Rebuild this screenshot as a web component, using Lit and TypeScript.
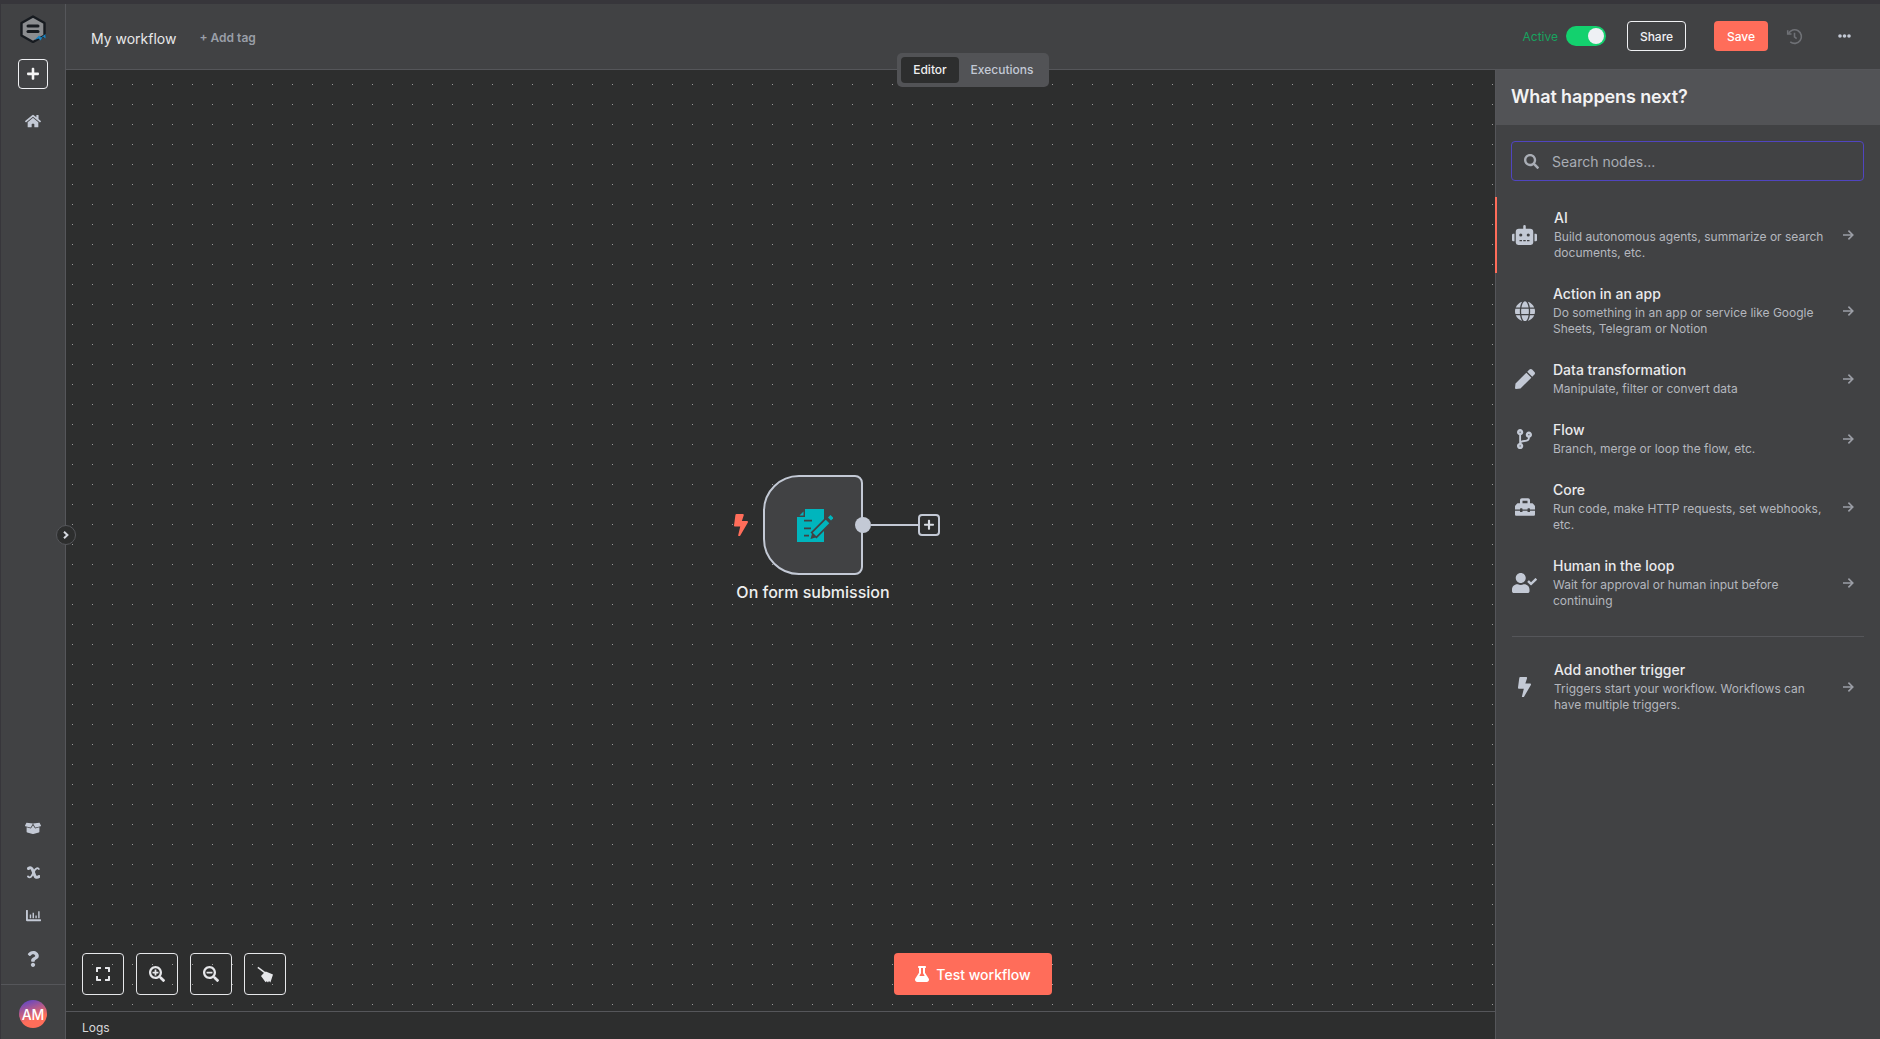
import { LitElement, html, css } from "lit";
import { customElement } from "lit/decorators.js";

const P: Record<string, [string, string]> = {
  home: ["0 0 576 512", "M280.37 148.26L96 300.11V464a16 16 0 0 0 16 16l112.06-.29a16 16 0 0 0 15.92-16V368a16 16 0 0 1 16-16h64a16 16 0 0 1 16 16v95.64a16 16 0 0 0 16 16.05L464 480a16 16 0 0 0 16-16V300L295.67 148.26a12.19 12.19 0 0 0-15.3 0zM571.6 251.47L488 182.56V44.05a12 12 0 0 0-12-12h-56a12 12 0 0 0-12 12v72.61L318.47 43a48 48 0 0 0-61 0L4.34 251.47a12 12 0 0 0-1.6 16.9l25.5 31A12 12 0 0 0 45.15 301l235.22-193.74a12.19 12.19 0 0 1 15.3 0L530.9 301a12 12 0 0 0 16.9-1.6l25.5-31a12 12 0 0 0-1.7-16.93z"],
  bolt: ["0 0 320 512", "M296 160H180.6l42.6-129.8C227.2 15 215.7 0 200 0H56C44 0 33.8 8.9 32.2 20.8l-32 240C-1.7 275.2 9.5 288 24 288h118.7L96.6 482.5c-3.6 15.2 8 29.5 23.3 29.5 8.4 0 16.4-4.4 20.8-12l176-304c9.3-15.9-2.2-36-20.7-36z"],
  pen: ["0 0 512 512", "M290.74 93.24l128.02 128.02-277.99 277.99-114.14 12.6C11.35 513.54-1.56 500.62.14 485.34l12.7-114.22 277.9-277.88zm207.2-19.06l-60.11-60.11c-18.75-18.75-49.16-18.75-67.91 0l-56.55 56.55 128.02 128.02 56.55-56.55c18.75-18.76 18.75-49.16 0-67.91z"],
  search: ["0 0 512 512", "M505 442.7L405.3 343c-4.5-4.5-10.6-7-17-7H372c27.6-35.3 44-79.7 44-128C416 93.1 322.9 0 208 0S0 93.1 0 208s93.1 208 208 208c48.3 0 92.7-16.4 128-44v16.3c0 6.4 2.5 12.5 7 17l99.7 99.7c9.4 9.4 24.6 9.4 33.9 0l28.3-28.3c9.4-9.4 9.4-24.6.1-34zM208 336c-70.7 0-128-57.2-128-128 0-70.7 57.2-128 128-128 70.7 0 128 57.2 128 128 0 70.7-57.2 128-128 128z"],
  zoomIn: ["0 0 512 512", "M304 192v32c0 6.6-5.4 12-12 12h-56v56c0 6.6-5.4 12-12 12h-32c-6.6 0-12-5.4-12-12v-56h-56c-6.6 0-12-5.4-12-12v-32c0-6.6 5.4-12 12-12h56v-56c0-6.6 5.4-12 12-12h32c6.6 0 12 5.4 12 12v56h56c6.6 0 12 5.4 12 12zm201 284.7L476.7 505c-9.4 9.4-24.6 9.4-33.9 0L343 405.3c-4.5-4.5-7-10.6-7-17V372c-35.3 27.6-79.7 44-128 44C93.1 416 0 322.9 0 208S93.1 0 208 0s208 93.1 208 208c0 48.3-16.4 92.7-44 128h16.3c6.4 0 12.5 2.5 17 7l99.7 99.7c9.3 9.4 9.3 24.6 0 34zM344 208c0-75.2-60.8-136-136-136S72 132.8 72 208s60.8 136 136 136 136-60.8 136-136z"],
  zoomOut: ["0 0 512 512", "M304 192v32c0 6.6-5.4 12-12 12H124c-6.6 0-12-5.4-12-12v-32c0-6.6 5.4-12 12-12h168c6.6 0 12 5.4 12 12zm201 284.7L476.7 505c-9.4 9.4-24.6 9.4-33.9 0L343 405.3c-4.5-4.5-7-10.6-7-17V372c-35.3 27.6-79.7 44-128 44C93.1 416 0 322.9 0 208S93.1 0 208 0s208 93.1 208 208c0 48.3-16.4 92.7-44 128h16.3c6.4 0 12.5 2.5 17 7l99.7 99.7c9.3 9.4 9.3 24.6 0 34zM344 208c0-75.2-60.8-136-136-136S72 132.8 72 208s60.8 136 136 136 136-60.8 136-136z"],
  expand: ["0 0 448 512", "M0 180V56c0-13.3 10.7-24 24-24h124c6.6 0 12 5.4 12 12v40c0 6.6-5.4 12-12 12H64v84c0 6.6-5.4 12-12 12H12c-6.6 0-12-5.4-12-12zM288 44v40c0 6.6 5.4 12 12 12h84v84c0 6.6 5.4 12 12 12h40c6.6 0 12-5.4 12-12V56c0-13.3-10.7-24-24-24H300c-6.6 0-12 5.4-12 12zm148 276h-40c-6.6 0-12 5.4-12 12v84h-84c-6.6 0-12 5.4-12 12v40c0 6.6 5.4 12 12 12h124c13.3 0 24-10.7 24-24V332c0-6.6-5.4-12-12-12zM160 468v-40c0-6.6-5.4-12-12-12H64v-84c0-6.6-5.4-12-12-12H12c-6.6 0-12 5.4-12 12v124c0 13.3 10.7 24 24 24h124c6.6 0 12-5.4 12-12z"],
  flask: ["0 0 448 512", "M437.2 403.5L320 215V64h8c13.3 0 24-10.7 24-24V24c0-13.3-10.7-24-24-24H120c-13.3 0-24 10.7-24 24v16c0 13.3 10.7 24 24 24h8v151L10.8 403.5C-18.5 450.6 15.3 512 70.9 512h306.2c55.7 0 89.4-61.5 60.1-108.5zM137.9 320l48.2-77.6c3.7-5.2 5.8-11.6 5.8-18.4V64h64v160c0 6.9 2.2 13.2 5.8 18.4l48.2 77.6h-172z"],
  question: ["0 0 384 512", "M202.021 0C122.202 0 70.503 32.703 29.914 91.026c-7.363 10.58-5.093 25.086 5.178 32.874l43.138 32.709c10.373 7.865 25.132 6.026 33.253-4.148 25.049-31.381 43.63-49.449 82.757-49.449 30.764 0 68.816 19.799 68.816 49.631 0 22.552-18.617 34.134-48.993 51.164-35.423 19.86-82.299 44.576-82.299 106.405V320c0 13.255 10.745 24 24 24h72.471c13.255 0 24-10.745 24-24v-5.773c0-42.86 125.268-44.645 125.268-160.627C377.504 66.256 286.902 0 202.021 0zM192 373.459c-38.196 0-69.271 31.075-69.271 69.271 0 38.195 31.075 69.27 69.271 69.27s69.271-31.075 69.271-69.271-31.075-69.27-69.271-69.27z"],
  plus: ["0 0 448 512", "M416 208H272V64c0-17.67-14.33-32-32-32h-32c-17.67 0-32 14.33-32 32v144H32c-17.67 0-32 14.33-32 32v32c0 17.67 14.33 32 32 32h144v144c0 17.67 14.33 32 32 32h32c17.67 0 32-14.33 32-32V304h144c17.67 0 32-14.33 32-32v-32c0-17.67-14.33-32-32-32z"],
  globe: ["0 0 496 512", "M336.5 160C322 70.7 287.8 8 248 8s-74 62.7-88.5 152h177zM152 256c0 22.2 1.2 43.5 3.3 64h185.3c2.1-20.5 3.3-41.8 3.3-64s-1.2-43.5-3.3-64H155.3c-2.1 20.5-3.3 41.8-3.3 64zm324.7-96c-28.6-67.9-86.5-120.4-158-141.6 24.4 33.8 41.2 84.7 50 141.6h108zM177.2 18.4C105.8 39.6 47.8 92.1 19.3 160h108c8.7-56.9 25.5-107.8 49.9-141.6zM487.4 192H372.7c2.1 21 3.3 42.5 3.3 64s-1.2 43-3.3 64h114.6c5.5-20.5 8.6-41.8 8.6-64s-3.1-43.5-8.5-64zM120 256c0-21.5 1.2-43 3.3-64H8.6C3.2 212.5 0 233.8 0 256s3.2 43.5 8.6 64h114.6c-2-21-3.2-42.5-3.2-64zm39.5 96c14.5 89.3 48.7 152 88.5 152s74-62.7 88.5-152h-177zm159.3 141.6c71.4-21.2 129.4-73.7 158-141.6h-108c-8.8 56.9-25.6 107.8-50 141.6zM19.3 352c28.6 67.9 86.5 120.4 158 141.6-24.4-33.8-41.2-84.7-50-141.6h-108z"],
  robot: ["0 0 640 512", "M32,224H64V416H32A31.96166,31.96166,0,0,1,0,384V256A31.96166,31.96166,0,0,1,32,224Zm512-48V448a64.06328,64.06328,0,0,1-64,64H160a64.06328,64.06328,0,0,1-64-64V176a79.974,79.974,0,0,1,80-80H288V32a32,32,0,0,1,64,0V96H464A79.974,79.974,0,0,1,544,176ZM264,256a40,40,0,1,0-40,40A39.997,39.997,0,0,0,264,256Zm-8,128H192v32h64Zm96,0H288v32h64ZM456,256a40,40,0,1,0-40,40A39.997,39.997,0,0,0,456,256Zm-8,128H384v32h64ZM640,256V384a31.96166,31.96166,0,0,1-32,32H576V224h32A31.96166,31.96166,0,0,1,640,256Z"],
  toolbox: ["0 0 512 512", "M502.63 214.63l-45.25-45.25c-6-6-14.14-9.37-22.63-9.37H384V80c0-26.51-21.49-48-48-48H176c-26.51 0-48 21.49-48 48v80H77.25c-8.49 0-16.62 3.37-22.63 9.37L9.37 214.63c-6 6-9.37 14.14-9.37 22.63V320h128v-16c0-8.84 7.16-16 16-16h32c8.84 0 16 7.16 16 16v16h128v-16c0-8.84 7.16-16 16-16h32c8.84 0 16 7.16 16 16v16h128v-82.75c0-8.48-3.37-16.62-9.37-22.62zM320 160H192V96h128v64zm64 208c0 8.84-7.16 16-16 16h-32c-8.84 0-16-7.16-16-16v-16H192v16c0 8.84-7.16 16-16 16h-32c-8.84 0-16-7.16-16-16v-16H0v96c0 17.67 14.33 32 32 32h448c17.67 0 32-14.33 32-32v-96H384v16z"],
  userCheck: ["0 0 640 512", "M224 256c70.7 0 128-57.3 128-128S294.7 0 224 0 96 57.3 96 128s57.3 128 128 128zm89.6 32h-16.7c-22.2 10.2-46.9 16-72.9 16s-50.6-5.8-72.9-16h-16.7C60.2 288 0 348.2 0 422.4V464c0 26.5 21.5 48 48 48h352c26.5 0 48-21.5 48-48v-41.6c0-74.2-60.2-134.4-134.4-134.4zm323-128.4l-27.8-28.1c-4.6-4.7-12.1-4.7-16.8-.1l-104.8 104-45.5-45.8c-4.6-4.7-12.1-4.7-16.8-.1l-28.1 27.9c-4.7 4.6-4.7 12.1-.1 16.8l81.7 82.3c4.6 4.7 12.1 4.7 16.8.1l141.3-140.2c4.6-4.7 4.7-12.2.1-16.8z"],
  branch: ["0 0 384 512", "M384 144c0-44.2-35.8-80-80-80s-80 35.8-80 80c0 36.4 24.3 67.1 57.5 76.8-.6 16.1-4.2 28.5-11 36.9-15.4 19.2-49.3 22.4-85.2 25.7-28.2 2.6-57.4 5.4-81.3 16.9v-144c32.5-10.2 56-40.5 56-76.3 0-44.2-35.8-80-80-80S0 35.8 0 80c0 35.8 23.5 66.1 56 76.3v199.3C23.5 365.9 0 396.2 0 432c0 44.2 35.8 80 80 80s80-35.8 80-80c0-34-21.2-63.1-51.2-74.6 3.1-5.2 7.8-9.8 14.9-13.4 16.2-8.2 40.4-10.4 66.1-12.8 42.2-3.9 90-8.4 118.2-43.4 14-17.4 21.1-39.8 21.6-67.9 31.6-10.8 54.4-40.7 54.4-75.9zM80 64c8.8 0 16 7.2 16 16s-7.2 16-16 16-16-7.2-16-16 7.2-16 16-16zm0 384c-8.8 0-16-7.2-16-16s7.2-16 16-16 16 7.2 16 16-7.2 16-16 16zm224-320c8.8 0 16 7.2 16 16s-7.2 16-16 16-16-7.2-16-16 7.2-16 16-16z"],
  box: ["0 0 640 512", "M425.7 256c-16.9 0-32.8-9-41.4-23.4L320 126l-64.2 106.6c-8.7 14.5-24.6 23.5-41.5 23.5-4.5 0-9-.6-13.3-1.9L64 215v178c0 14.7 10 27.5 24.2 31l216.2 54.1c10.2 2.5 20.9 2.5 31 0L551.8 424c14.2-3.6 24.2-16.4 24.2-31V215l-137 39.1c-4.3 1.3-8.8 1.9-13.3 1.9zm212.6-112.2L586.8 41c-3.1-6.2-9.8-9.8-16.7-8.9L320 64l91.7 152.1c3.8 6.3 11.4 9.3 18.5 7.3l197.9-56.5c9.9-2.9 14.7-13.9 10.2-23.1zM53.2 41L1.7 143.8c-4.6 9.2.3 20.2 10.1 23l197.9 56.5c7.1 2 14.7-1 18.5-7.3L320 64 69.8 32.1c-6.9-.8-13.5 2.7-16.6 8.9z"],
  chart: ["0 0 512 512", "M496 384H64V80c0-8.84-7.16-16-16-16H16C7.16 64 0 71.16 0 80v336c0 17.67 14.33 32 32 32h464c8.84 0 16-7.16 16-16v-32c0-8.84-7.16-16-16-16zM136 352h32c4.4 0 8-3.6 8-8V232c0-4.4-3.6-8-8-8h-32c-4.4 0-8 3.6-8 8v112c0 4.4 3.6 8 8 8zm96 0h32c4.4 0 8-3.6 8-8V168c0-4.4-3.6-8-8-8h-32c-4.4 0-8 3.6-8 8v176c0 4.4 3.6 8 8 8zm96 0h32c4.4 0 8-3.6 8-8V264c0-4.4-3.6-8-8-8h-32c-4.4 0-8 3.6-8 8v80c0 4.4 3.6 8 8 8zm96 0h32c4.4 0 8-3.6 8-8V120c0-4.4-3.6-8-8-8h-32c-4.4 0-8 3.6-8 8v224c0 4.4 3.6 8 8 8z"],
};

const icon = (name: string, width: number) => {
  const [vb, d] = P[name];
  return html`<svg class="fa" viewBox=${vb} style="width:${width}px"><path d=${d}></path></svg>`;
};

const arrow = html`<svg class="arrow" viewBox="0 0 12 12"><path d="M1 6H10.6M6.4 1.6L10.8 6L6.4 10.4"></path></svg>`;

const ITEMS: { icon: string; w: number; title: string; desc: string; tall: boolean; accent?: boolean }[] = [
  { icon: "robot", w: 25, title: "AI", desc: "Build autonomous agents, summarize or search documents, etc.", tall: true, accent: true },
  { icon: "globe", w: 20, title: "Action in an app", desc: "Do something in an app or service like Google Sheets, Telegram or Notion", tall: true },
  { icon: "pen", w: 20, title: "Data transformation", desc: "Manipulate, filter or convert data", tall: false },
  { icon: "branch", w: 15, title: "Flow", desc: "Branch, merge or loop the flow, etc.", tall: false },
  { icon: "toolbox", w: 20, title: "Core", desc: "Run code, make HTTP requests, set webhooks, etc.", tall: true },
  { icon: "userCheck", w: 25, title: "Human in the loop", desc: "Wait for approval or human input before continuing", tall: true },
];

@customElement("app-root")
export class AppRoot extends LitElement {
  static styles = css`
    :host { display: block; width: 100%; height: 100vh; overflow: hidden; background: #37363b; font-family: Inter, "Liberation Sans", sans-serif; color: #e6e6e8; }
    * { box-sizing: border-box; }
    .fa { display: block; fill: currentColor; height: auto; flex: none; }
    .page { display: flex; flex-direction: column; height: 100%; padding: 4px 0 0 1px; }
    .frame { flex: 1; display: flex; min-height: 0; }
    .side { width: 65px; flex: none; background: #414244; border-right: 1px solid #55565a; display: flex; flex-direction: column; align-items: center; color: #c3c9d5; position: relative; }
    .logo { width: 28px; height: 28px; margin-top: 11px; display: block; }
    .newbtn { width: 30px; height: 30px; margin-top: 16px; border: 1px solid #f0f1f4; border-radius: 4px; display: flex; align-items: center; justify-content: center; color: #f5f5f5; }
    .nav { height: 43.5px; width: 100%; display: flex; align-items: center; justify-content: center; }
    .home { margin-top: 10px; }
    .spacer { flex: 1; }
    .bottom-nav { width: 100%; }
    .user { width: 100%; height: 55px; margin-top: 3px; padding-top: 4px; border-top: 1px solid #55565a; display: flex; align-items: center; justify-content: center; }
    .avatar { width: 28px; height: 28px; border-radius: 50%; background: linear-gradient(160deg, #5a45c8 5%, #ff6d5a 65%); color: #fff; font-size: 14px; font-weight: 500; display: flex; align-items: center; justify-content: center; }
    .collapse { position: absolute; right: -11px; top: 521px; width: 20px; height: 20px; border-radius: 50%; background: #2d2e2e; border: 1px solid #55565a; color: #d5d8df; display: flex; align-items: center; justify-content: center; z-index: 3; }
    .collapse svg { width: 8px; height: 8px; fill: none; stroke: currentColor; stroke-width: 2; }
    .main { flex: 1; min-width: 0; display: flex; flex-direction: column; position: relative; }
    .head { height: 66px; flex: none; background: #414244; border-bottom: 1px solid #55565a; display: flex; align-items: center; padding: 3px 0 0 25px; }
    .name { font-size: 14px; color: #e8e8ea; }
    .tag { margin-left: 23px; font-size: 12px; font-weight: 600; color: #9a9fa8; margin-top: -2px; }
    .actions { margin-left: auto; display: flex; align-items: center; height: 30px; margin-top: -4px; }
    .active { font-size: 12px; color: #17a35f; font-weight: 400; margin-right: 8px; }
    .toggle { width: 40px; height: 20px; border-radius: 10px; background: #13d16e; display: flex; align-items: center; justify-content: flex-end; padding-right: 2px; margin-right: 21px; }
    .toggle i { display: block; width: 16px; height: 16px; border-radius: 50%; background: #eef0f4; }
    .btn { height: 30px; border-radius: 4px; font-size: 12px; font-weight: 500; display: flex; align-items: center; justify-content: center; }
    .share { width: 59px; border: 1px solid #f0f1f4; color: #f0f1f4; margin-right: 28px; }
    .save { width: 54px; background: #ff6d5a; color: #fff; }
    .hist { width: 17px; margin-left: 18px; color: #6f7176; display: block; }
    .dots { width: 13px; height: 4px; margin-left: 35px; margin-right: 29px; color: #c3c9d5; display: block; }
    .tabs { position: absolute; top: 49px; left: 831px; width: 152px; height: 34px; background: #525356; border-radius: 5px; display: flex; align-items: center; padding: 0 4px; z-index: 2; font-size: 12px; font-weight: 500; }
    .tab { height: 26px; display: flex; align-items: center; justify-content: center; padding-bottom: 1px; }
    .tab.on { width: 58px; background: #2d2e2e; border-radius: 4px; color: #f0f0f0; }
    .tab.off { flex: 1; color: #c3c9d5; }
    .work { flex: 1; min-height: 0; display: flex; }
    .col { flex: 1; min-width: 0; display: flex; flex-direction: column; }
    .canvas { flex: 1; min-height: 0; position: relative; background-color: #2d2e2e; background-image: radial-gradient(circle at 6.5px 14.5px, #9a9a9a 0, #9a9a9a 0.5px, transparent 0.9px); background-size: 20px 20px; }
    .logs { height: 28px; flex: none; background: #2d2e2e; border-top: 1px solid #55565a; display: flex; align-items: center; padding: 3px 0 0 16px; font-size: 12px; color: #d8d8da; }
    .tools { position: absolute; left: 16px; bottom: 16px; display: flex; gap: 12px; }
    .tool { width: 42px; height: 42px; border: 1px solid #e6e7ea; border-radius: 4px; display: flex; align-items: center; justify-content: center; color: #e6e7ea; }
    .broom { width: 17px; height: 17px; display: block; fill: currentColor; }
    .test { position: absolute; left: 828px; bottom: 16px; width: 158px; height: 42px; background: #ff6d5a; color: #fff; border-radius: 4px; display: flex; align-items: center; justify-content: center; gap: 7px; font-size: 14px; font-weight: 500; }
    .node { position: absolute; left: 697px; top: 405px; width: 100px; height: 100px; border: 2px solid #c3c9d5; border-radius: 36px 8px 8px 36px; background: #414244; display: flex; align-items: center; justify-content: center; padding-left: 4px; }
    .node svg { width: 36px; height: 33px; display: block; }
    .nlabel { position: absolute; left: 647px; width: 200px; top: 512px; text-align: center; font-size: 16px; font-weight: 500; color: #eeeeef; line-height: 20px; }
    .nbolt { position: absolute; left: 668px; top: 444px; color: #ff6d5a; }
    .ndot { position: absolute; left: 789px; top: 447px; width: 16px; height: 16px; border-radius: 50%; background: #c3c9d5; }
    .nline { position: absolute; left: 805px; top: 454px; width: 48px; height: 2px; background: #c3c9d5; }
    .nplus { position: absolute; left: 852px; top: 444px; width: 22px; height: 22px; border: 2px solid #c3c9d5; border-radius: 4px; display: flex; align-items: center; justify-content: center; color: #d9dde4; }
    .panel { width: 385px; flex: none; background: #414244; border-left: 1px solid #55565a; display: flex; flex-direction: column; }
    .ptitle { height: 55px; flex: none; background: #525356; display: flex; align-items: center; padding: 0 0 3px 15px; font-size: 18px; font-weight: 600; letter-spacing: -0.1px; color: #f2f2f3; }
    .searchwrap { padding: 16px 16px 16px 15px; }
    .search { height: 40px; border: 1px solid #5045c0; border-radius: 4px; display: flex; align-items: center; padding-left: 12px; gap: 13px; color: #a9adb5; font-size: 14px; }
    .row { display: flex; align-items: center; padding: 0 26px 0 16px; position: relative; }
    .row.tall { height: 76px; }
    .row.short { height: 60px; }
    .row.accent::before { content: ""; position: absolute; left: -1px; top: 0; bottom: 0; width: 2px; background: #ff6d5a; }
    .ricon { width: 25px; flex: none; display: flex; justify-content: center; color: #c3c9d5; margin-right: 16px; }
    .rtext { flex: 1; min-width: 0; }
    .rtitle { font-size: 14px; font-weight: 500; line-height: 18px; margin-bottom: 2px; color: #eaeaec; }
    .rdesc { font-size: 12px; line-height: 16px; color: #b4b7be; }
    .arrow { width: 12px; height: 12px; flex: none; margin-left: 12px; fill: none; stroke: #9b9ea6; stroke-width: 1.6; }
    .accent .rtext, .trigger .rtext { margin-left: 1px; }
    .rule { height: 1px; margin: 15px 16px 12px; background: #55565a; }
  `;

  render() {
    return html`<div class="page"><div class="frame">
      <aside class="side">
        <svg class="logo" viewBox="0 0 28 28">
          <path d="M14 1.5L25.5 8V20.5L14 27L2.5 20.5V8Z" fill="#8b8d90" stroke="#171b20" stroke-width="2.4" stroke-linejoin="round"></path>
          <rect x="7.5" y="9.5" width="13" height="3" rx="1.5" fill="#171b20"></rect>
          <rect x="7.5" y="15" width="13" height="3" rx="1.5" fill="#171b20"></rect>
          <path d="M15.5 25L20 20.5L22 22.5L26.5 19V23.5L24 21.5L21.5 25.5L19.5 23.5Z" fill="#1c86c4"></path>
        </svg>
        <div class="newbtn">${icon("plus", 12)}</div>
        <div class="nav home">${icon("home", 16)}</div>
        <div class="spacer"></div>
        <div class="bottom-nav">
          <div class="nav">${icon("box", 16)}</div>
          <div class="nav"><svg width="13" height="13" viewBox="0 0 13 13" fill="none" stroke="currentColor" stroke-linecap="round"><path d="M1.5 2.5C3.5 1 5 2 5.8 4.5L7.5 9C8.3 11.5 10 12 12 10.5" stroke-width="3"></path><path d="M11.8 3C10.5 1.5 9 2.3 7.8 4L5.2 9C4 11.5 2.5 12 1 10.5" stroke-width="1.8"></path></svg></div>
          <div class="nav">${icon("chart", 15)}</div>
          <div class="nav">${icon("question", 12)}</div>
        </div>
        <div class="user"><div class="avatar">AM</div></div>
        <div class="collapse"><svg viewBox="0 0 8 8"><path d="M2 .8L5.4 4L2 7.2"></path></svg></div>
      </aside>
      <div class="main">
        <header class="head">
          <span class="name">My workflow</span>
          <span class="tag">+ Add tag</span>
          <div class="actions">
            <span class="active">Active</span>
            <div class="toggle"><i></i></div>
            <div class="btn share">Share</div>
            <div class="btn save">Save</div>
            <svg class="hist" viewBox="0 0 16 16" fill="none" stroke="currentColor" stroke-width="1.5"><path d="M2.4 5.2A6.4 6.4 0 1 1 4 13"></path><path d="M1.6 2V5.6H5.2"></path><path d="M8 4.5V8.4L10 10"></path></svg>
            <svg class="dots" viewBox="0 0 13 4" fill="currentColor"><circle cx="2" cy="2" r="1.8"></circle><circle cx="6.5" cy="2" r="1.8"></circle><circle cx="11" cy="2" r="1.8"></circle></svg>
          </div>
        </header>
        <div class="tabs"><div class="tab on">Editor</div><div class="tab off">Executions</div></div>
        <div class="work">
          <div class="col">
            <div class="canvas">
              <div class="nbolt">${icon("bolt", 14)}</div>
              <div class="node">
                <svg viewBox="0 0 36 33">
                  <path d="M8 0H27V33H0V8H8Z" fill="#00b5bd"></path>
                  <path d="M2.5 6.5L6.5 2.5V6.5Z" fill="#00b5bd"></path>
                  <path d="M7 11.7H15M7 19.3H14M7 26.7H12" stroke="#414244" stroke-width="1.7"></path>
                  <path d="M16.5 26.5L33 10" stroke="#414244" stroke-width="8.5"></path>
                  <path d="M17.5 25.5L30.5 12.5" stroke="#00b5bd" stroke-width="5"></path>
                  <path d="M31 8.5L33.5 6L36.5 9L34 11.5Z" fill="#00b5bd"></path>
                  <path d="M13.5 30L15.2 24L19.5 28.3Z" fill="#414244"></path>
                </svg>
              </div>
              <div class="ndot"></div><div class="nline"></div>
              <div class="nplus">${icon("plus", 10)}</div>
              <div class="nlabel">On form submission</div>
              <div class="tools">
                <div class="tool">${icon("expand", 14)}</div>
                <div class="tool">${icon("zoomIn", 16)}</div>
                <div class="tool">${icon("zoomOut", 16)}</div>
                <div class="tool"><svg class="broom" viewBox="0 0 17 17"><path d="M.4 1.9L1.3.7L8.6 6.2L7.7 7.4Z"></path><path d="M6.6 7.2L8.8 5.4L16 8.6L13.4 16.4L12 14.9L11 16.4L9.8 15.2L8.6 16.2L4 10Z"></path></svg></div>
              </div>
              <div class="test">${icon("flask", 14)}<span>Test workflow</span></div>
            </div>
            <div class="logs">Logs</div>
          </div>
          <aside class="panel">
            <div class="ptitle">What happens next?</div>
            <div class="searchwrap"><div class="search">${icon("search", 15)}<span>Search nodes...</span></div></div>
            ${ITEMS.map((it) => html`
              <div class="row ${it.tall ? "tall" : "short"} ${it.accent ? "accent" : ""}">
                <div class="ricon">${icon(it.icon, it.w)}</div>
                <div class="rtext"><div class="rtitle">${it.title}</div><div class="rdesc">${it.desc}</div></div>
                ${arrow}
              </div>`)}
            <div class="rule"></div>
            <div class="row tall trigger">
              <div class="ricon">${icon("bolt", 13)}</div>
              <div class="rtext"><div class="rtitle">Add another trigger</div><div class="rdesc">Triggers start your workflow. Workflows can have multiple triggers.</div></div>
              ${arrow}
            </div>
          </aside>
        </div>
      </div>
    </div></div>`;
  }
}
